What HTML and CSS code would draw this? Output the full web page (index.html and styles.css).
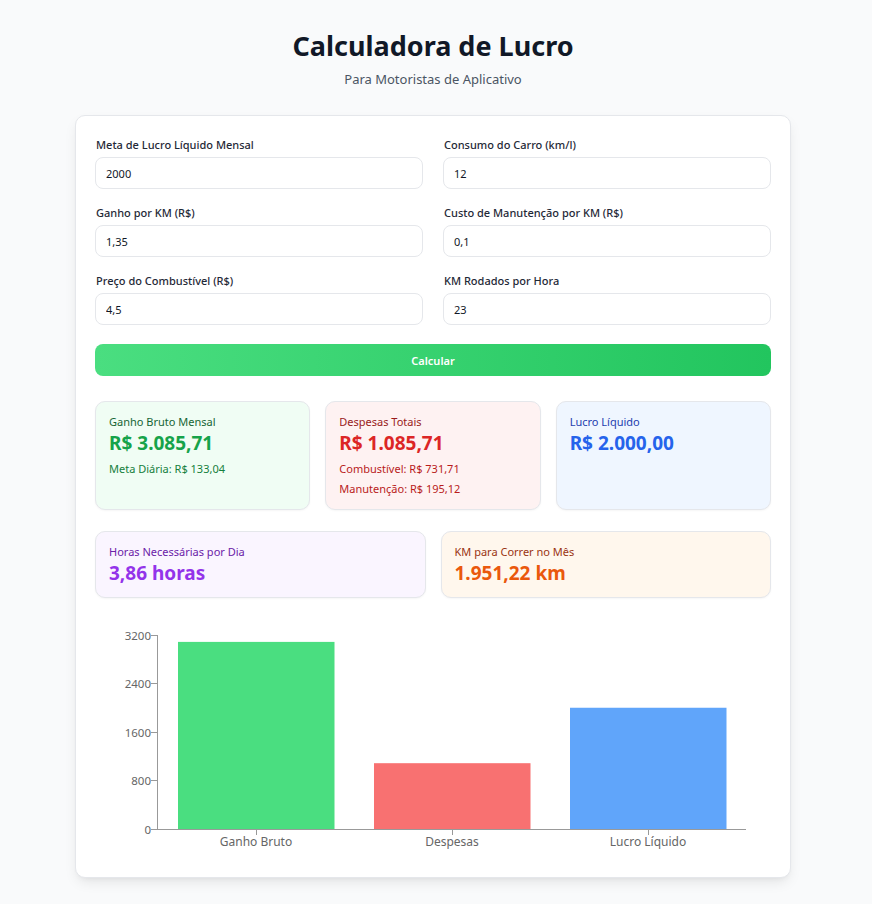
FILE: index.html
```html
<!DOCTYPE html>
<html lang="pt-BR">
<head>
<meta charset="utf-8">
<title>Calculadora de Lucro</title>
<link rel="stylesheet" href="styles.css">
</head>
<body>
<div class="page">
  <header class="header">
    <h1 class="title">Calculadora de Lucro</h1>
    <p class="subtitle">Para Motoristas de Aplicativo</p>
  </header>
  <main class="card">
    <div class="form-grid">
      <div class="field">
        <label class="label">Meta de Lucro Líquido Mensal</label>
        <input class="input" type="text" value="2000">
      </div>
      <div class="field">
        <label class="label">Consumo do Carro (km/l)</label>
        <input class="input" type="text" value="12">
      </div>
      <div class="field">
        <label class="label">Ganho por KM (R$)</label>
        <input class="input" type="text" value="1,35">
      </div>
      <div class="field">
        <label class="label">Custo de Manutenção por KM (R$)</label>
        <input class="input" type="text" value="0,1">
      </div>
      <div class="field">
        <label class="label">Preço do Combustível (R$)</label>
        <input class="input" type="text" value="4,5">
      </div>
      <div class="field">
        <label class="label">KM Rodados por Hora</label>
        <input class="input" type="text" value="23">
      </div>
    </div>
    <button class="button" type="button">Calcular</button>

    <div class="results-3">
      <div class="res res-green">
        <div class="res-title">Ganho Bruto Mensal</div>
        <div class="res-value">R$ 3.085,71</div>
        <div class="res-sub">Meta Diária: R$ 133,04</div>
      </div>
      <div class="res res-red">
        <div class="res-title">Despesas Totais</div>
        <div class="res-value">R$ 1.085,71</div>
        <div class="res-sub">Combustível: R$ 731,71</div>
        <div class="res-sub">Manutenção: R$ 195,12</div>
      </div>
      <div class="res res-blue">
        <div class="res-title">Lucro Líquido</div>
        <div class="res-value">R$ 2.000,00</div>
      </div>
    </div>

    <div class="results-2">
      <div class="res res-purple">
        <div class="res-title">Horas Necessárias por Dia</div>
        <div class="res-value">3,86 horas</div>
      </div>
      <div class="res res-orange">
        <div class="res-title">KM para Correr no Mês</div>
        <div class="res-value">1.951,22 km</div>
      </div>
    </div>

    <div class="chart">
      <svg width="676" height="240" viewBox="0 0 676 240" xmlns="http://www.w3.org/2000/svg">
        <g class="bars">
          <rect x="83" y="23.9" width="156.5" height="187.1" fill="#4ade80"/>
          <rect x="279" y="145.2" width="156.5" height="65.8" fill="#f87171"/>
          <rect x="475" y="89.75" width="156.5" height="121.25" fill="#60a5fa"/>
        </g>
        <g stroke="#999" stroke-width="1" fill="none">
          <line x1="62.5" y1="17" x2="62.5" y2="211"/>
          <line x1="62" y1="211.5" x2="651" y2="211.5"/>
          <line x1="56" y1="17.5" x2="62" y2="17.5"/>
          <line x1="56" y1="65.5" x2="62" y2="65.5"/>
          <line x1="56" y1="114.5" x2="62" y2="114.5"/>
          <line x1="56" y1="162.5" x2="62" y2="162.5"/>
          <line x1="56" y1="211.5" x2="62" y2="211.5"/>
          <line x1="161.5" y1="211" x2="161.5" y2="217"/>
          <line x1="357.5" y1="211" x2="357.5" y2="217"/>
          <line x1="553.5" y1="211" x2="553.5" y2="217"/>
        </g>
        <g class="ytick" text-anchor="end">
          <text x="56" y="21.5">3200</text>
          <text x="56" y="70">2400</text>
          <text x="56" y="118.5">1600</text>
          <text x="56" y="167">800</text>
          <text x="56" y="215.5">0</text>
        </g>
        <g class="xtick" text-anchor="middle">
          <text x="161" y="227.5">Ganho Bruto</text>
          <text x="357" y="227.5">Despesas</text>
          <text x="553" y="227.5">Lucro Líquido</text>
        </g>
      </svg>
    </div>
  </main>
</div>
</body>
</html>
```

FILE: styles.css
```css
* { box-sizing: border-box; }

body {
  margin: 0;
  background: #f9fafb;
  font-family: "Noto Sans", "Open Sans", sans-serif;
  color: #111827;
}

.page {
  padding: 28px 6px 30px 0;
}

.header {
  text-align: center;
}

.title {
  margin: 0;
  font-size: 27px;
  line-height: 36px;
  font-weight: 700;
  color: #111827;
}

.subtitle {
  margin: 5px 0 0;
  font-size: 13px;
  line-height: 20px;
  color: #4b5563;
}

.card {
  width: 716px;
  margin: 26px auto 0;
  padding: 21px 19px 19px;
  background: #fff;
  border: 1px solid #e5e7eb;
  border-radius: 10px;
  box-shadow: 0 6px 14px -3px rgba(0,0,0,0.10), 0 3px 6px -4px rgba(0,0,0,0.08);
}

.form-grid {
  display: grid;
  grid-template-columns: 1fr 1fr;
  column-gap: 20px;
  row-gap: 16px;
}

.field {
  display: flex;
  flex-direction: column;
}

.label {
  font-size: 11px;
  line-height: 16px;
  font-weight: 500;
  color: #1f2937;
  margin-bottom: 4px;
  padding-left: 1px;
}

.input {
  height: 32px;
  border: 1px solid #e5e7eb;
  border-radius: 8px;
  padding: 0 10px;
  font-family: inherit;
  font-size: 11px;
  color: #111827;
  background: #fff;
  outline: none;
}

.button {
  display: block;
  width: 100%;
  height: 32px;
  margin-top: 19px;
  border: none;
  border-radius: 8px;
  background: linear-gradient(to right, #4ade80, #22c55e);
  color: #fff;
  font-family: inherit;
  font-size: 11px;
  font-weight: 600;
}

.results-3 {
  display: grid;
  grid-template-columns: repeat(3, 1fr);
  gap: 15px;
  margin-top: 25px;
}

.results-2 {
  display: grid;
  grid-template-columns: repeat(2, 1fr);
  gap: 15px;
  margin-top: 21px;
}

.res {
  border: 1px solid #e5e7eb;
  border-radius: 10px;
  padding: 13px 13px 10px;
  box-shadow: 0 1px 2px rgba(0,0,0,0.04);
}

.res-title {
  font-size: 11px;
  line-height: 14px;
}

.res-value {
  font-size: 19px;
  line-height: 28px;
  font-weight: 700;
}

.res-sub {
  font-size: 11px;
  line-height: 20px;
}

.res-value + .res-sub { margin-top: 2px; }

.res-green { background: #f0fdf4; }
.res-green .res-title { color: #166534; }
.res-green .res-value { color: #16a34a; }
.res-green .res-sub { color: #15803d; }

.res-red { background: #fef2f2; }
.res-red .res-title { color: #991b1b; }
.res-red .res-value { color: #dc2626; }
.res-red .res-sub { color: #b91c1c; }

.res-blue { background: #eff6ff; }
.res-blue .res-title { color: #1e40af; }
.res-blue .res-value { color: #2563eb; }

.res-purple { background: #faf5ff; }
.res-purple .res-title { color: #6b21a8; }
.res-purple .res-value { color: #9333ea; }

.res-orange { background: #fff7ed; }
.res-orange .res-title { color: #9a3412; }
.res-orange .res-value { color: #ea580c; }

.chart {
  margin-top: 20px;
  height: 240px;
}

.chart svg {
  display: block;
}

.ytick text, .xtick text {
  font-family: "Noto Sans", "Open Sans", sans-serif;
  fill: #666;
}

.ytick text { font-size: 11.5px; }
.xtick text { font-size: 12px; }
```
